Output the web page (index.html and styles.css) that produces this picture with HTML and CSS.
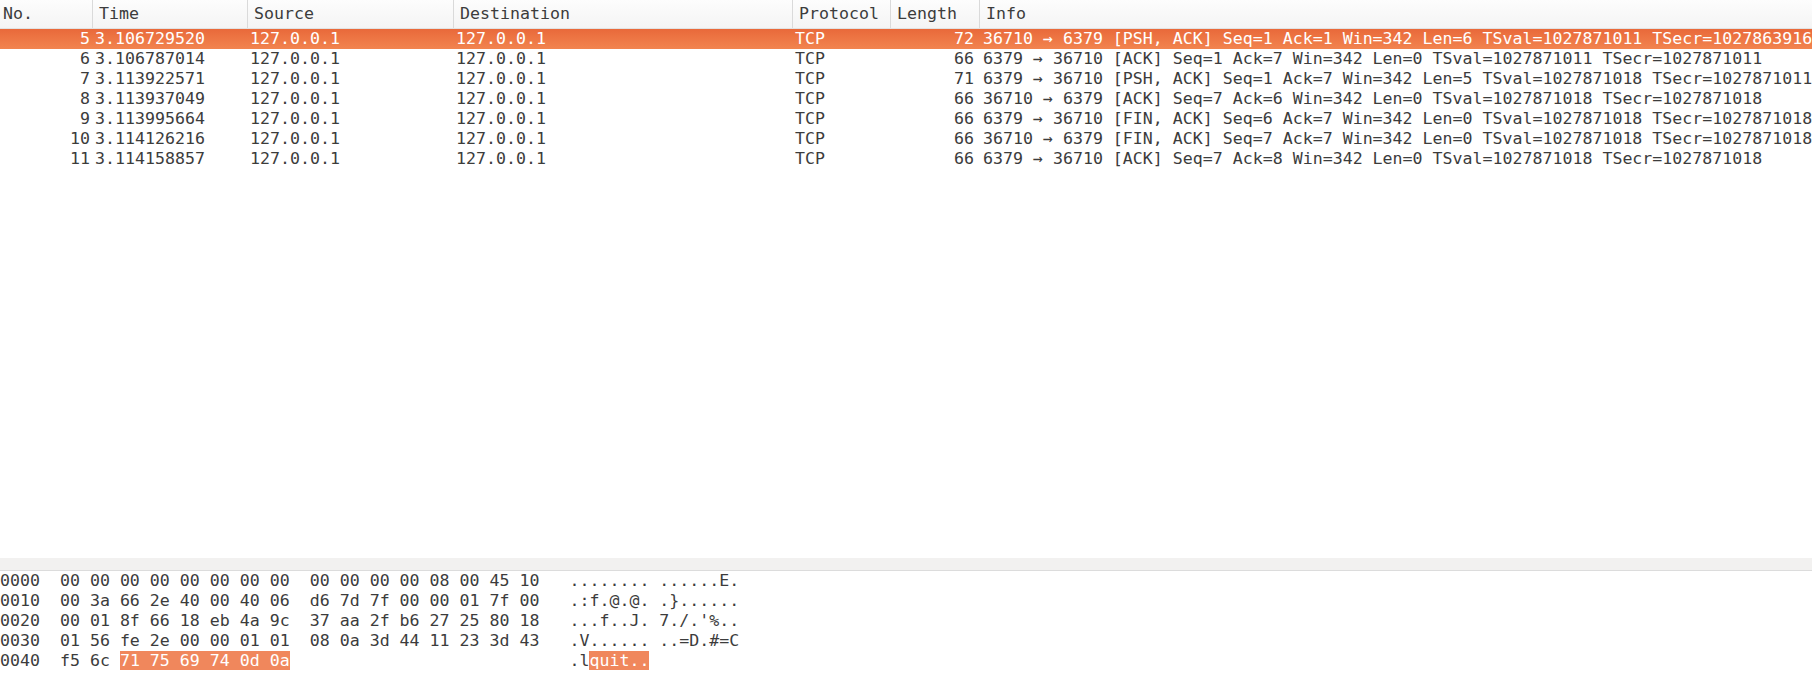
FILE: index.html
```html
<!DOCTYPE html>
<html>
<head>
<meta charset="utf-8">
<link rel="stylesheet" href="styles.css">
</head>
<body>
<div class="app">
  <div class="packet-list">
    <div class="row hdr">
      <div class="c">No.</div>
      <div class="c">Time</div>
      <div class="c">Source</div>
      <div class="c">Destination</div>
      <div class="c">Protocol</div>
      <div class="c">Length</div>
      <div class="c">Info</div>
    </div>
    <div class="row pkt sel">
      <div class="c r">5</div><div class="c">3.106729520</div><div class="c">127.0.0.1</div><div class="c">127.0.0.1</div><div class="c">TCP</div><div class="c r">72</div><div class="c info">36710 → 6379 [PSH, ACK] Seq=1 Ack=1 Win=342 Len=6 TSval=1027871011 TSecr=1027863916</div>
    </div>
    <div class="row pkt">
      <div class="c r">6</div><div class="c">3.106787014</div><div class="c">127.0.0.1</div><div class="c">127.0.0.1</div><div class="c">TCP</div><div class="c r">66</div><div class="c info">6379 → 36710 [ACK] Seq=1 Ack=7 Win=342 Len=0 TSval=1027871011 TSecr=1027871011</div>
    </div>
    <div class="row pkt">
      <div class="c r">7</div><div class="c">3.113922571</div><div class="c">127.0.0.1</div><div class="c">127.0.0.1</div><div class="c">TCP</div><div class="c r">71</div><div class="c info">6379 → 36710 [PSH, ACK] Seq=1 Ack=7 Win=342 Len=5 TSval=1027871018 TSecr=1027871011</div>
    </div>
    <div class="row pkt">
      <div class="c r">8</div><div class="c">3.113937049</div><div class="c">127.0.0.1</div><div class="c">127.0.0.1</div><div class="c">TCP</div><div class="c r">66</div><div class="c info">36710 → 6379 [ACK] Seq=7 Ack=6 Win=342 Len=0 TSval=1027871018 TSecr=1027871018</div>
    </div>
    <div class="row pkt">
      <div class="c r">9</div><div class="c">3.113995664</div><div class="c">127.0.0.1</div><div class="c">127.0.0.1</div><div class="c">TCP</div><div class="c r">66</div><div class="c info">6379 → 36710 [FIN, ACK] Seq=6 Ack=7 Win=342 Len=0 TSval=1027871018 TSecr=1027871018</div>
    </div>
    <div class="row pkt">
      <div class="c r">10</div><div class="c">3.114126216</div><div class="c">127.0.0.1</div><div class="c">127.0.0.1</div><div class="c">TCP</div><div class="c r">66</div><div class="c info">36710 → 6379 [FIN, ACK] Seq=7 Ack=7 Win=342 Len=0 TSval=1027871018 TSecr=1027871018</div>
    </div>
    <div class="row pkt">
      <div class="c r">11</div><div class="c">3.114158857</div><div class="c">127.0.0.1</div><div class="c">127.0.0.1</div><div class="c">TCP</div><div class="c r">66</div><div class="c info">6379 → 36710 [ACK] Seq=7 Ack=8 Win=342 Len=0 TSval=1027871018 TSecr=1027871018</div>
    </div>
  </div>
  <div class="splitter"></div>
  <div class="bytes">
    <div class="bl">0000  00 00 00 00 00 00 00 00  00 00 00 00 08 00 45 10   ........ ......E.</div>
    <div class="bl">0010  00 3a 66 2e 40 00 40 06  d6 7d 7f 00 00 01 7f 00   .:f.@.@. .}......</div>
    <div class="bl">0020  00 01 8f 66 18 eb 4a 9c  37 aa 2f b6 27 25 80 18   ...f..J. 7./.'%..</div>
    <div class="bl">0030  01 56 fe 2e 00 00 01 01  08 0a 3d 44 11 23 3d 43   .V...... ..=D.#=C</div>
    <div class="bl">0040  f5 6c <span class="hl">71 75 69 74 0d 0a</span>                            .l<span class="hl">quit..</span></div>
  </div>
</div>
</body>
</html>
```

FILE: styles.css
```css
html, body {
  margin: 0;
  padding: 0;
  background: #ffffff;
}

body {
  font-family: "DejaVu Sans Mono", "Liberation Mono", monospace;
  font-size: 16.6px;
  color: #3c3c3c;
  overflow: hidden;
}

.app {
  display: flex;
  flex-direction: column;
  width: 1812px;
  height: 674px;
  overflow: hidden;
}

.packet-list {
  flex: 1;
  overflow: hidden;
  background: #ffffff;
}

.row {
  display: grid;
  grid-template-columns: 92px 155px 206px 339px 98px 89px max-content;
  white-space: nowrap;
}

.hdr {
  height: 29px;
  box-sizing: border-box;
  background: linear-gradient(#fdfdfd, #f4f4f4);
  border-bottom: 1px solid #e2e2e2;
}

.hdr .c {
  padding: 4px 0 0 6px;
  line-height: 20px;
  border-left: 1px solid #dadada;
}

.hdr .c:first-child {
  border-left: none;
  padding-left: 3px;
}

.pkt {
  height: 20px;
  line-height: 20px;
}

.pkt .c {
  padding-left: 3px;
  overflow: hidden;
}

.pkt .c.r {
  text-align: right;
  padding-left: 0;
  padding-right: 2px;
}

.pkt .c.r:nth-child(6) {
  padding-right: 5px;
}

.pkt .c.info {
  padding-left: 4px;
  overflow: visible;
}

.sel {
  background: linear-gradient(#e9693a, #f2844f);
  color: #ffffff;
}

.splitter {
  height: 12px;
  background: #f2f1f0;
  border-bottom: 1px solid #dcdcdc;
}

.bytes {
  height: 103px;
  background: #ffffff;
}

.bl {
  white-space: pre;
  height: 20px;
  line-height: 20px;
}

.hl {
  background: #f0875c;
  color: #ffffff;
}
```
